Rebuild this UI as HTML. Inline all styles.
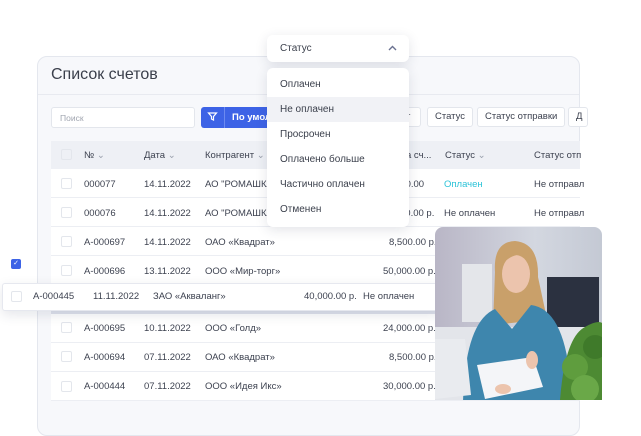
<!DOCTYPE html>
<html><head><meta charset="utf-8"><style>
*{box-sizing:border-box;margin:0;padding:0}
body{width:641px;height:400px;background:#fff;font-family:"Liberation Sans",sans-serif;position:relative;overflow:hidden;color:#3a3f4b}
.abs{position:absolute}
.panel{left:37px;top:56px;width:543px;height:380px;background:#f7f8fb;border:1px solid #e4e7ee;border-radius:10px}
.t{font-size:9.5px;white-space:nowrap;color:#3d4250}
.cb{width:11px;height:11px;border:1px solid #e3e6ec;border-radius:2px;background:#fff}
.row{left:51px;width:529px;height:29px;background:#fff;border-bottom:1px solid #eceef3}
.chip{height:20px;top:107px;background:#fff;border:1px solid #e3e6ec;border-radius:3px;font-size:9.5px;line-height:18px;padding:0 7px;color:#3d4250}
.dd{left:267px;width:142px;background:#fff;border-radius:6px;box-shadow:0 3px 12px rgba(40,50,80,.13)}
.it{position:absolute;left:13px;font-size:10px;color:#3a3f4b}
</style></head><body>
<div class="abs panel"></div>
<div class="abs" style="left:51px;top:66px;font-size:16px;color:#3a3f4b">Список счетов</div>
<div class="abs" style="left:38px;top:94px;width:541px;height:1px;background:#e8eaf0"></div>
<div class="abs" style="left:51px;top:107px;width:144px;height:21px;background:#fff;border:1px solid #e3e6ec;border-radius:3px;font-size:8.5px;color:#a0a5b0;padding:5px 8px">Поиск</div>
<div class="abs" style="left:201px;top:107px;width:80px;height:21px;background:#3d63e6;border-radius:3px"></div>
<div class="abs" style="left:224px;top:107px;width:1px;height:21px;background:#6c8af0"></div>
<svg class="abs" style="left:207px;top:111px" width="11" height="11" viewBox="0 0 11 11"><path d="M1.5 2h8L6.5 5.5V9L4.5 8V5.5Z" fill="none" stroke="#fff" stroke-width="1.2"/></svg>
<div class="abs t" style="left:232px;top:112px;color:#fff;font-weight:bold">По умол</div>
<div class="abs chip" style="left:400px;width:21px;padding:0 5px">т</div>
<div class="abs chip" style="left:427px">Статус</div>
<div class="abs chip" style="left:477px">Статус отправки</div>
<div class="abs chip" style="left:568px;width:20px">Д</div>
<div class="abs" style="left:51px;top:141px;width:529px;height:28px;background:#eef0f5"></div>
<div class="abs cb" style="left:61px;top:149px;background:#eef0f5"></div>
<div class="abs t" style="left:84px;top:150px">№ <span style="color:#9aa0ad">⌄</span></div>
<div class="abs t" style="left:144px;top:150px">Дата <span style="color:#9aa0ad">⌄</span></div>
<div class="abs t" style="left:205px;top:150px">Контрагент <span style="color:#9aa0ad">⌄</span></div>
<div class="abs t" style="left:406px;top:150px">а сч...</div>
<div class="abs t" style="left:445px;top:150px">Статус <span style="color:#9aa0ad">⌄</span></div>
<div class="abs t" style="left:534px;top:150px">Статус отп</div>
<div class="abs row" style="top:169px"></div>
<div class="abs cb" style="left:61px;top:178px"></div>
<div class="abs t" style="left:84px;top:179px">000077</div><div class="abs t" style="left:144px;top:179px">14.11.2022</div><div class="abs t" style="left:205px;top:179px">АО "РОМАШКА"</div><div class="abs t" style="left:395px;top:179px">000.00</div><div class="abs t" style="left:444px;top:179px;color:#2cc3d8">Оплачен</div><div class="abs t" style="left:534px;top:179px">Не отправл</div>
<div class="abs row" style="top:198px"></div>
<div class="abs cb" style="left:61px;top:207px"></div>
<div class="abs t" style="left:84px;top:208px">000076</div><div class="abs t" style="left:144px;top:208px">14.11.2022</div><div class="abs t" style="left:205px;top:208px">АО "РОМАШКА"</div><div class="abs t" style="left:400px;top:208px">00.00 р.</div><div class="abs t" style="left:444px;top:208px">Не оплачен</div><div class="abs t" style="left:534px;top:208px">Не отправл</div>
<div class="abs row" style="top:227px"></div>
<div class="abs cb" style="left:61px;top:236px"></div>
<div class="abs t" style="left:84px;top:237px">А-000697</div><div class="abs t" style="left:144px;top:237px">14.11.2022</div><div class="abs t" style="left:205px;top:237px">ОАО «Квадрат»</div><div class="abs t" style="left:389px;top:237px">8,500.00 р.</div>
<div class="abs row" style="top:256px"></div>
<div class="abs cb" style="left:61px;top:265px"></div>
<div class="abs t" style="left:84px;top:266px">А-000696</div><div class="abs t" style="left:144px;top:266px">13.11.2022</div><div class="abs t" style="left:205px;top:266px">ООО «Мир-торг»</div><div class="abs t" style="left:383px;top:266px">50,000.00 р.</div>
<div class="abs" style="left:51px;top:285px;width:529px;height:32px;background:#dfe2ec"></div>
<div class="abs row" style="top:314px"></div>
<div class="abs cb" style="left:61px;top:322px"></div>
<div class="abs t" style="left:84px;top:323px">А-000695</div><div class="abs t" style="left:144px;top:323px">10.11.2022</div><div class="abs t" style="left:205px;top:323px">ООО «Голд»</div><div class="abs t" style="left:383px;top:323px">24,000.00 р.</div>
<div class="abs row" style="top:343px"></div>
<div class="abs cb" style="left:61px;top:351px"></div>
<div class="abs t" style="left:84px;top:352px">А-000694</div><div class="abs t" style="left:144px;top:352px">07.11.2022</div><div class="abs t" style="left:205px;top:352px">ОАО «Квадрат»</div><div class="abs t" style="left:389px;top:352px">8,500.00 р.</div>
<div class="abs row" style="top:372px"></div>
<div class="abs cb" style="left:61px;top:381px"></div>
<div class="abs t" style="left:84px;top:381px">А-000444</div><div class="abs t" style="left:144px;top:381px">07.11.2022</div><div class="abs t" style="left:205px;top:381px">ООО «Идея Икс»</div><div class="abs t" style="left:383px;top:381px">30,000.00 р.</div>
<div class="abs" style="left:2px;top:283px;width:440px;height:28px;background:#fff;border:1px solid #e6e8ef;border-radius:3px;box-shadow:0 4px 12px rgba(40,50,80,.12)"></div>
<div class="abs cb" style="left:11px;top:291px"></div>
<div class="abs t" style="left:33px;top:291px">А-000445</div><div class="abs t" style="left:93px;top:291px">11.11.2022</div><div class="abs t" style="left:153px;top:291px">ЗАО «Акваланг»</div><div class="abs t" style="left:304px;top:291px">40,000.00 р.</div><div class="abs t" style="left:363px;top:291px">Не оплачен</div>
<div class="abs" style="left:11px;top:259px;width:10px;height:10px;background:#3d63e6;border-radius:2px;color:#fff;font-size:7px;line-height:10px;text-align:center">✓</div>
<div class="abs dd" style="top:35px;height:27px"></div>
<div class="it" style="left:280px;top:43px">Статус</div>
<svg class="abs" style="left:388px;top:45px" width="9" height="6"><path d="M1 5L4.5 1.5L8 5" fill="none" stroke="#6a7190" stroke-width="1.4"/></svg>
<div class="abs dd" style="top:68px;height:159px"></div>
<div class="abs" style="left:267px;top:97px;width:142px;height:25px;background:#f1f2f6"></div>
<div class="it" style="left:280px;top:79px">Оплачен</div>
<div class="it" style="left:280px;top:104px">Не оплачен</div>
<div class="it" style="left:280px;top:129px">Просрочен</div>
<div class="it" style="left:280px;top:154px">Оплачено больше</div>
<div class="it" style="left:280px;top:179px">Частично оплачен</div>
<div class="it" style="left:280px;top:204px">Отменен</div>
<svg class="abs" style="left:435px;top:227px" width="167" height="173" viewBox="0 0 167 173">
<defs><clipPath id="c"><rect width="167" height="180" rx="8"/></clipPath>
<linearGradient id="bg" x1="0" y1="0" x2="1" y2="0"><stop offset="0" stop-color="#b9b6c6"/><stop offset=".6" stop-color="#d3d7e0"/><stop offset="1" stop-color="#c4c9d4"/></linearGradient></defs>
<g clip-path="url(#c)">
<rect width="167" height="173" fill="url(#bg)"/>
<rect x="27" y="37" width="30" height="58" fill="#e4e6ea"/>
<rect x="112" y="50" width="52" height="65" fill="#2b3140"/>
<rect x="0" y="100" width="167" height="73" fill="#e3e5ea"/>
<path d="M60 45Q58 15 80 14Q104 16 103 50L112 92L58 98Z" fill="#c9a06a"/>
<ellipse cx="81" cy="47" rx="14" ry="19" fill="#ecc4ad"/>
<path d="M66 40Q68 20 84 20Q98 24 97 42Q92 30 82 28Q72 30 66 40Z" fill="#c9a06a"/>
<path d="M28 175Q30 95 60 82L77 102L96 78Q128 82 135 150L125 175Z" fill="#3e86ad"/>
<path d="M0 112L30 112L36 168L0 172Z" fill="#e9ebef"/>
<path d="M42 138L98 130L108 160L50 172Z" fill="#f4f5f8"/>
<ellipse cx="68" cy="162" rx="8" ry="5" fill="#ecc4ad"/>
<ellipse cx="97" cy="133" rx="6" ry="9" fill="#ecc4ad"/>
<path d="M125 173Q130 110 150 100Q167 90 170 100V173Z" fill="#4d8a33"/>
<circle cx="140" cy="140" r="13" fill="#5f9d3e"/><circle cx="160" cy="120" r="12" fill="#3f7a2a"/><circle cx="150" cy="162" r="14" fill="#6aa848"/>
</g></svg>
</body></html>
